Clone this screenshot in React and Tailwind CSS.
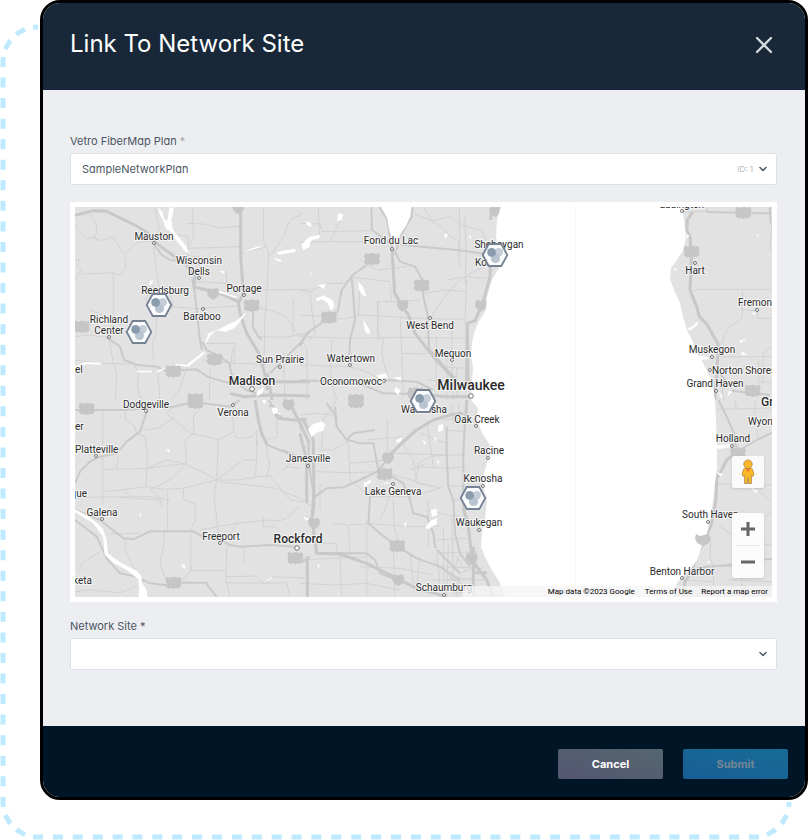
import React, { useState } from "react";
import clsx from "clsx";
import { ChevronDown, Minus, Plus, X } from "lucide-react";

// The map is drawn in six tiles, each at three units to the pixel.
const tiles = [
  {
    x: 70,
    y: 200,
    minor: [
      "M60 40L78 70L80 100L72 115L92 122L130 110L165 170L168 202L150 225L130 218L40 222",
      "M15 75L50 115L72 112M15 180L28 178L22 200L35 212L15 240",
      "M165 160L200 128L245 122M255 20L268 90L245 125",
      "M250 140L262 230L270 270L240 260L228 300L262 330L258 400L248 430L250 480",
      "M130 218L130 350L118 420L130 490L140 520L136 600",
      "M15 480L90 490L190 492L205 515L202 560L215 600",
      "M368 20L370 110L350 160M300 100L355 110L352 165L385 172L390 205",
      "M350 70L400 72L450 84L510 78M352 145L510 140",
      "M580 20L580 120L596 160L590 300L584 360L582 500",
      "M510 160L590 140M700 40L660 60L640 110L600 170",
      "M380 245L470 250L468 210M460 250L505 262L600 270L720 268",
      "M300 320L385 326L500 318M300 280L310 320M540 320L600 330L650 350L680 400L720 410",
      "M400 430L495 430L493 490L580 492L680 490M400 480L495 490",
      "M490 440L480 500L500 560M350 500L330 570L300 600M262 505L270 600",
      "M15 410L60 405L110 412M60 330L125 355M560 410L640 412L720 400",
      "M420 510L418 600M640 460L645 600M670 300L668 410",
    ],
    major: [
      "M250 130L275 165L300 180L325 182",
      "M366 235L374 275L390 420L396 450",
      "M396 425L410 450L450 470L478 490L488 540L530 570L590 590",
      "M110 412L150 440L162 480L200 494L260 500L290 514L340 510L380 508L412 530L460 545L478 548",
      "M536 312L550 330L548 380L565 410L576 420",
      "M720 392L690 430L650 470L600 520",
    ],
    highway: [
      "M15 46L70 32L110 34L200 78L232 98L260 130L300 160L340 185L375 225L372 262L440 276L505 305L510 340L530 400L566 460L584 520L592 570",
      "M512 20L512 170L520 280L508 305",
      "M592 520L606 600M480 580L520 590L600 585L720 588M610 545L720 545",
    ],
    water: [
      "M264 24L276 32L284 60L292 62L298 22L312 24L304 60L308 88L350 140L357 162L344 152L318 120L300 92L288 88L280 62L270 46Z",
      "M404 430L416 400L446 388L470 376L500 362L530 335L512 362L492 385L466 396L440 390L420 408L408 430Z",
      "M620 156L674 146L678 156L625 164ZM612 174L636 180L632 186L616 180ZM694 136L718 120L720 140L700 150Z",
      "M516 158L560 140L582 138L540 152ZM448 212L466 214L462 222ZM240 244L250 240L246 252L238 256Z",
      "M15 500L45 486L95 488L90 494L50 492L20 508ZM202 512L245 512L244 517L203 517ZM260 512L320 492L350 494L400 456L405 460L355 500L310 496L260 518Z",
      "M446 272L500 290L498 294L446 278ZM560 575L582 562L576 580L560 590ZM708 66L720 72L720 78Z",
    ],
    shields: [[36, 380], [310, 514], [434, 478], [545, 316], [376, 598]],
    badges: [[429, 281], [505, 24]],
  },
  {
    x: 300,
    y: 200,
    minor: [
      "M0 70L60 72L65 95L215 92M55 20L60 130M0 125L190 125M130 40L90 125",
      "M0 270L30 275L32 300L45 400L30 420M30 275L80 250L130 250L155 232L270 245",
      "M0 345L90 350L130 358L180 345L380 356L500 358",
      "M0 410L150 415L320 412L500 415M235 302L232 400L250 420L245 460L262 530",
      "M272 305L360 300M270 250L275 305L232 305L235 420",
      "M370 280L435 270L500 275M370 20L392 60L430 85L445 105L475 122L478 200",
      "M345 44L395 62L450 50L490 78L545 90L560 120M478 20L480 155",
      "M495 45L498 160L496 250M440 240L500 230L560 235",
      "M500 240L495 370M390 355L420 310L450 270L485 235L550 200",
      "M300 345L305 460L310 590M360 460L430 462L500 458M455 355L455 460L460 600",
      "M0 495L150 500L210 520L250 545M410 410L408 560M305 460L370 462",
      "M0 420L20 440L22 600M95 420L92 540L110 600M420 500L500 505M440 470L440 600M380 540L500 545M470 500L472 590",
      "M180 240L176 345M320 200L230 210L180 180",
    ],
    major: [
      "M214 20L216 90L270 130M238 20L262 60L268 100L275 140M338 20L335 50L300 110L290 150",
      "M200 195L158 225L125 270L112 340M155 230L160 290L165 360L150 420L148 470",
      "M282 150L300 185L345 200L368 240L370 290L382 340L388 460M275 130L340 138L470 150L560 162",
      "M0 440L20 400L70 365M0 540L100 545L190 555L250 580L340 582M250 540L350 545L400 570",
      "M240 168L215 178M500 370L498 560",
    ],
    highway: [
      "M276 150L284 280L325 345L345 400L400 470L470 545M575 20L572 60M572 160L570 230L548 310L525 362L502 370L504 560",
      "M388 450L440 510L465 535M320 580L440 590L510 590",
    ],
    water: [
      "M240 14L335 14L330 50L318 78L302 100L295 125L280 122L268 92L262 55Z",
      "M4 134L28 110L60 104L58 116L40 118L16 142ZM114 40L130 42L125 60L112 64ZM18 64L32 68L36 82L20 74Z",
      "M176 244L190 262L200 290L186 284L176 268ZM48 296L70 286L98 300L104 322L92 332L84 310L66 298L52 304Z",
      "M188 358L208 388L210 404L196 396ZM52 256L78 252L72 266ZM430 104L444 102L438 116ZM506 108L514 106L510 118Z",
      "M230 526L258 520L264 534L236 536ZM278 532L304 530L302 542ZM285 560L300 570L296 586L284 576ZM28 216L38 222L32 224Z",
    ],
    shields: [[216, 177], [365, 256], [87, 352], [168, 600], [348, 580]],
    badges: [[308, 316], [543, 316], [586, 32]],
  },
  {
    x: 540,
    y: 200,
    minor: [
      "M455 275L470 268L696 268M608 268L606 355L570 380L552 405L548 430L536 434",
      "M608 330L652 332L654 355L696 355M536 470L696 470M500 20L505 34L420 36",
      "M696 70L690 150L696 160M656 475L655 545L696 548M510 510L545 520L550 600",
      "M500 20L500 36M696 440L670 460L668 545",
    ],
    major: ["M500 36L690 40L690 20M690 40L692 70M575 572L690 585M540 520L570 560"],
    highway: [
      "M458 36L442 60L440 90L450 110L454 180L450 270L470 320L478 350L500 372L534 432L532 500L524 600",
    ],
    water: [
      "M442 386L458 378L474 362L472 376L450 392ZM478 466L505 472L508 478L480 480ZM400 206L410 204L406 214Z",
      "M606 454L622 466L604 464ZM598 422L620 416L602 430ZM636 340L646 336L644 346ZM648 104L656 104L654 110Z",
      "M534 572L548 588L545 597ZM568 572L576 575L560 594ZM438 100L448 108L442 116Z",
    ],
    shields: [[455, 155], [610, 38], [638, 572]],
    badges: [],
  },
  {
    x: 70,
    y: 400,
    minor: [
      "M98 35L98 310M165 35L168 60L195 80L200 100L225 110L232 160L228 260",
      "M225 90L265 85L310 55L360 100L445 118M310 20L290 40L310 60M370 100L345 120L350 190M400 10L370 50L372 105",
      "M98 208L230 206L290 180L340 190L410 222L440 240M228 205L350 190",
      "M98 275L150 270L230 260L280 268L340 265L440 240L520 180L560 180",
      "M440 240L445 120L490 96L490 60L480 40M495 100L500 115L545 112L560 90L560 140",
      "M440 240L500 240L555 232L560 180L562 120M560 230L600 228L660 300L700 305M590 130L592 170L600 190L590 230",
      "M450 245L620 265L700 300M440 240L432 290L445 400M20 292L240 290L300 300M160 270L190 292",
      "M293 270L293 392M340 268L342 300L375 310L376 360L360 392M150 292L270 300L275 320",
      "M0 330L70 350L120 380M165 415L165 450L195 510L220 545M283 395L280 440L270 490L290 545",
      "M362 400L362 515L330 545M362 512L465 512M470 440L468 540L480 590M580 350L580 380L620 382",
      "M480 405L500 370L600 360L630 362L650 355L690 320M525 490L520 440M470 530L560 528L570 545L590 550L610 530L720 535",
      "M620 60L622 110L592 120M660 190L640 210M15 575L60 570L150 578L200 560M470 548L600 550L650 548L660 590",
      "M28 510L35 490L90 455M210 400L120 402M145 170L140 205M650 200L690 205M280 300L240 270L300 240L345 195M390 390L500 370",
    ],
    major: [
      "M15 250L30 215L60 185L90 170L140 160L170 125L210 95L220 65L230 35M15 30L160 30L310 20L360 8L400 10",
      "M15 330L90 360L160 415L190 418L240 394L370 394L400 410L450 420L480 435L510 440L600 435L680 440",
      "M15 360L80 410L110 475L150 520L200 530L240 550L290 556L330 548L410 548L415 560L440 590",
      "M595 0L640 60M640 150L700 180M592 135L655 160M400 10L480 20L510 0",
    ],
    highway: [
      "M555 0L565 60L575 100L592 135M600 15L625 55L670 60L710 58M660 10L690 70L718 130M690 100L710 180L710 310",
    ],
    water: [
      "M15 328L60 352L98 385L110 420L114 460L150 487L200 512L216 530L214 545L230 570L232 592L205 592L208 560L205 538L170 510L130 488L104 464L99 410L70 370L15 336Z",
      "M576 0L588 0L584 14ZM602 22L622 24L624 40L610 42ZM625 36L634 42L626 44ZM288 148L300 150L296 158Z",
      "M208 336L214 342L212 354ZM332 492L346 496L344 508ZM584 545L608 530L604 538ZM700 350L716 356L712 362Z",
    ],
    shields: [[50, 26], [376, 8], [310, 548], [676, 474]],
    badges: [[655, 14]],
  },
  {
    x: 300,
    y: 400,
    minor: [
      "M0 45L45 40L100 45M0 130L30 150M65 145L70 60L110 0M145 110L150 240L210 290L205 370",
      "M50 215L150 218L240 215M55 150L100 150L150 120M210 290L330 290M330 290L420 265M235 210L400 260",
      "M262 60L262 150L240 230M300 120L340 180L350 250L430 265M360 100L440 130M350 200L440 205",
      "M265 150L280 160L440 165L495 165M350 240L355 190L390 170L440 165M330 210L380 190M380 60L400 200",
      "M200 370L330 380L420 378M280 300L282 380L300 440M240 360L270 290M380 330L440 345L480 350",
      "M410 460L530 455M410 420L500 415M430 380L432 560M455 350L460 520M480 460L450 540M420 500L550 505",
      "M150 375L200 372M45 430L110 430L110 460L45 460M0 480L200 470M120 465L125 590",
      "M200 360L200 590M280 440L285 590M330 460L340 550M100 370L145 375L150 460M180 500L300 505L400 525",
      "M0 550L100 555L200 550L300 570M360 470L350 560M400 480L480 560M440 540L520 535M470 590L480 520L530 500",
      "M430 60L500 55M455 10L460 70M475 10L478 60M440 90L500 95M200 120L310 110M150 190L265 180",
      "M60 250L60 330M45 320L20 310M385 300L385 440M500 200L440 205M500 260L450 258M490 300L450 300M440 520L500 560L505 590",
      "M410 450L420 550M445 430L440 590M470 470L500 520M380 560L480 555M460 580L560 570M395 540L560 540",
    ],
    major: [
      "M45 290L80 265L130 262L180 240L230 215L270 170M80 10L105 45L110 80L140 120L160 100L225 90",
      "M140 118L180 130L220 130L235 210M270 225L310 250L330 300L340 340L380 350L400 400L405 440L430 470L480 520",
      "M210 290L205 370L240 400L290 438L350 475L420 500L480 540M440 80L440 165L445 260L460 300L465 400L480 460L510 500",
      "M0 80L25 120L28 200L40 280L35 350L45 430M100 460L200 460L225 480L240 520L290 540L320 550",
      "M500 0L495 60L490 160L490 320L505 370M110 80L105 20M0 490L30 470",
    ],
    highway: [
      "M270 165L310 125L350 90L400 60L450 45L490 40M35 350L50 460L120 462L200 490L290 535L350 565L440 590M22 470L22 592M10 60L40 120L42 310L38 350",
      "M490 325L505 380L515 470L530 500L560 540L580 590M520 440L520 590M520 518L560 518",
      "M500 0L498 50",
    ],
    water: [
      "M24 88L40 72L64 64L76 72L70 92L50 98L34 112ZM415 76L430 72L428 92L414 96ZM288 122L306 110L304 122L292 130ZM366 118L378 128L374 134Z",
      "M192 250L214 238L212 248L190 262ZM250 250L266 246L264 252ZM392 330L410 326L412 346L396 350ZM376 380L392 362L412 354L410 372L384 388Z",
      "M312 370L320 368L316 384ZM408 184L418 184L416 192ZM400 112L412 114L406 122ZM52 492L58 494L56 510ZM408 444L414 444L412 450ZM10 350L24 356L18 362Z",
    ],
    shields: [[168, 6], [254, 222], [292, 438]],
    badges: [[264, 174], [42, 370], [295, 540], [515, 475]],
  },
  {
    x: 540,
    y: 400,
    minor: [
      "M585 0L590 30M530 28L696 24M532 252L696 255M645 0L645 60L655 110M535 375L570 400L600 420L696 436",
      "M505 400L512 430L510 470L520 500L522 590M540 500L605 498L606 590M560 540L696 545M440 540L522 545",
      "M640 240L650 270L690 300M655 410L656 436M680 350L696 330M600 498L600 430",
    ],
    major: ["M450 510L500 500L600 492L660 480L696 476M535 0L560 50L582 100L590 150M600 150L650 120L696 98"],
    highway: ["M600 150L560 180L545 210L530 235L528 300L515 370L490 430L465 470L458 510L435 545L430 590"],
    water: [
      "M530 136L572 132L570 142L534 148ZM530 216L548 222L542 230ZM632 264L655 272L650 280ZM498 484L512 484L508 490Z",
    ],
    shields: [[594, 160]],
    badges: [],
  },
];

const cities = [
  { name: "Mauston", x: 154, y: 240, dot: [154, 243] },
  { name: "Wisconsin", x: 199, y: 264 },
  { name: "Dells", x: 199, y: 275, dot: [199, 278] },
  { name: "Reedsburg", x: 165, y: 294 },
  { name: "Portage", x: 244, y: 292, dot: [244, 295] },
  { name: "Baraboo", x: 202, y: 320, dot: [203, 309] },
  { name: "Richland", x: 109, y: 323 },
  { name: "Center", x: 109, y: 334, dot: [109, 337] },
  { name: "el", x: 75, y: 373, anchor: "start" },
  { name: "Sun Prairie", x: 280, y: 363, dot: [280, 367] },
  { name: "Madison", x: 252, y: 385, dot: [252, 389], size: 12 },
  { name: "Fond du Lac", x: 391, y: 244, dot: [392, 249] },
  { name: "Sheboygan", x: 499, y: 248 },
  { name: "Kohler", x: 475, y: 266, anchor: "start" },
  { name: "West Bend", x: 430, y: 329, dot: [430, 318] },
  { name: "Mequon", x: 453, y: 357, dot: [452, 360] },
  { name: "Watertown", x: 351, y: 362, dot: [350, 365] },
  { name: "Oconomowoc", x: 351, y: 385, dot: [384, 381] },
  { name: "Milwaukee", x: 471, y: 390, dot: [471, 396], size: 14 },
  { name: "Ludington", x: 682, y: 208, dot: [682, 211] },
  { name: "Hart", x: 695, y: 274, dot: [695, 263] },
  { name: "Fremont", x: 738, y: 306, dot: [757, 310], anchor: "start" },
  { name: "Muskegon", x: 712, y: 353, dot: [712, 357] },
  { name: "Norton Shores", x: 712, y: 374, dot: [710, 370], anchor: "start" },
  { name: "Grand Haven", x: 715, y: 387, dot: [716, 391] },
  { name: "Grand Rapids", x: 761, y: 406, anchor: "start", size: 12 },
  { name: "Dodgeville", x: 146, y: 408, dot: [146, 411] },
  { name: "Verona", x: 233, y: 416, dot: [233, 405] },
  { name: "er", x: 75, y: 430, anchor: "start" },
  { name: "Platteville", x: 75, y: 453, dot: [96, 456], anchor: "start" },
  { name: "Dubuque", x: 87, y: 497, anchor: "end" },
  { name: "Galena", x: 102, y: 516, dot: [102, 519] },
  { name: "Freeport", x: 221, y: 540, dot: [220, 543] },
  { name: "Janesville", x: 308, y: 462, dot: [308, 466] },
  { name: "Rockford", x: 298, y: 543, dot: [297, 548], size: 12 },
  { name: "Maquoketa", x: 92, y: 584, anchor: "end" },
  { name: "Waukesha", x: 424, y: 413 },
  { name: "Oak Creek", x: 477, y: 423, dot: [476, 426] },
  { name: "Racine", x: 489, y: 454, dot: [488, 458] },
  { name: "Kenosha", x: 483, y: 482, dot: [483, 486] },
  { name: "Lake Geneva", x: 393, y: 495, dot: [393, 484] },
  { name: "Waukegan", x: 479, y: 526, dot: [479, 530] },
  { name: "Schaumburg", x: 444, y: 591, dot: [444, 595] },
  { name: "Wyoming", x: 748, y: 425, anchor: "start" },
  { name: "Holland", x: 733, y: 442, dot: [732, 446] },
  { name: "South Haven", x: 682, y: 518, dot: [708, 522], anchor: "start" },
  { name: "Benton Harbor", x: 682, y: 575, dot: [682, 578] },
];

const sites = [
  [159, 305],
  [139, 332],
  [495, 255],
  [423, 401],
  [473, 498],
];

function MapArt() {
  return (
    <svg
      viewBox="75 207 697 390"
      preserveAspectRatio="xMidYMid slice"
      className="block h-full w-full"
      role="img"
      aria-label="Map of network sites"
    >
      <rect x="75" y="207" width="697" height="390" fill="#e2e2e2" />
      {tiles.map((t) => (
        <g key={`${t.x}-${t.y}`} transform={`translate(${t.x} ${t.y}) scale(0.33333)`} fill="none" strokeLinejoin="round">
          <path d={t.minor.join("")} stroke="#d2d2d2" strokeWidth="3" />
          <path d={t.major.join("")} stroke="#cacaca" strokeWidth="6" />
          <path d={t.highway.join("")} stroke="#c8c8c8" strokeWidth="9" />
          <path d={t.water.join("")} fill="#fff" />
          {t.shields.map(([x, y]) => (
            <path
              key={`${x}-${y}`}
              transform={`translate(${x} ${y})`}
              d="M-20 -18L-12 -15L0 -18L12 -15L20 -18L24 -8L21 0L24 10L16 17L6 16L0 20L-6 16L-16 17L-24 10L-21 0L-24 -8Z"
              fill="#c6c6c6"
            />
          ))}
          {t.badges.map(([x, y]) => (
            <path
              key={`${x}-${y}`}
              transform={`translate(${x} ${y})`}
              d="M-13 -17L0 -14L13 -17L18 -6L16 6L8 14L0 19L-8 14L-16 6L-18 -6Z"
              fill="#c6c6c6"
            />
          ))}
        </g>
      ))}

      {/* Lake Michigan */}
      <path
        d="M501 206L497 220L496 237L502 263L492 280L487 297L486 310L478 323L474 333L472 343L471 357L473 367L472 380L471 400L478 408L477 420L482 433L490 445L491 453L487 463L483 477L484 490L487 500L485 520L482 533L481 547L485 557L492 570L500 583L505 598H673L677 583L682 577L690 570L697 560L703 543L707 533L711 517L713 500L715 483L717 467L717 447L716 420L715 400L713 390L710 377L703 363L697 353L692 340L687 330L683 317L680 303L675 292L670 279L671 268L675 263L683 250L686 237L684 220L682 206Z"
        fill="#fff"
      />
      <path d="M575.5 207V597" stroke="#f7f7f7" />
      {/* the South Haven badge hangs over the shore */}
      <path d="M696 534L700 536L708 534L711 538L709 543L703 546L697 543L695 538Z" fill="#c6c6c6" />

      <g fill="#fff" stroke="#555" strokeWidth="0.8">
        {cities.map((c) => c.dot && <circle key={c.name} cx={c.dot[0]} cy={c.dot[1]} r={c.size ? 2.3 : 1.5} />)}
        <circle cx="503" cy="592" r="2" stroke="#bbb" />
      </g>
      <g fontFamily="Roboto, sans-serif" fill="#2b2b2b" stroke="#fff" strokeWidth="2" strokeOpacity="0.7" paintOrder="stroke">
        {cities.map((c) => (
          <text
            key={c.name}
            x={c.x}
            y={c.y}
            textAnchor={c.anchor || "middle"}
            fontSize={c.size || 10}
            fontWeight={c.size ? 500 : 400}
          >
            {c.name}
          </text>
        ))}
      </g>

      {sites.map(([x, y]) => (
        <g key={`${x}-${y}`} transform={`translate(${x} ${y})`}>
          <path d="M-12.3 0L-6.3 -11H6.3L12.3 0L6.3 11H-6.3Z" fill="#fafcfd" stroke="#748294" strokeWidth="1.8" />
          <circle cx="3.8" cy="-2.8" r="4.2" fill="#c5ced8" />
          <circle cx="0.5" cy="3.4" r="4.6" fill="#b9c4d0" />
          <circle cx="-3.4" cy="-2.6" r="4.4" fill="#8b9bae" />
        </g>
      ))}
    </svg>
  );
}

function Pegman() {
  return (
    <svg viewBox="0 0 16 26" width="16" height="26" aria-hidden="true">
      <path
        d="M5 8.8H11L12.6 10.5L14 16L12.6 17.5L11.4 16.5V24.5H8.4V19H7.6V24.5H4.6V16.5L3.4 17.5L2 16L3.4 10.5Z"
        fill="#fbb829"
        stroke="#a98445"
        strokeWidth="0.8"
        strokeLinejoin="round"
      />
      <path d="M5.2 9.3H10.8L8 13.2Z" fill="#e8792b" />
      <circle cx="8" cy="5.2" r="4.2" fill="#fbb829" stroke="#a98445" strokeWidth="0.8" />
    </svg>
  );
}

function SiteMap() {
  return (
    <div className="relative mt-4 border-[5px] border-white bg-white aspect-[707/400] overflow-hidden">
      <MapArt />
      <div className="absolute right-2 bottom-[19px] flex flex-col gap-[25px] text-[#666]">
        <button type="button" aria-label="Street View" className="flex h-8 w-8 items-center justify-center rounded-xs bg-[#fafafa] shadow">
          <Pegman />
        </button>
        <div className="flex w-8 flex-col items-center rounded-xs bg-[#fcfcfc] shadow">
          <button type="button" aria-label="Zoom in" className="flex h-8 w-full items-center justify-center">
            <Plus size={24} strokeWidth={3} strokeLinecap="butt" />
          </button>
          <div className="h-px w-6 bg-[#e6e6e6]" />
          <button type="button" aria-label="Zoom out" className="flex h-8 w-full items-center justify-center">
            <Minus size={24} strokeWidth={3} strokeLinecap="butt" />
          </button>
        </div>
      </div>
      <div className="absolute right-0 bottom-0 flex h-[11px] items-center bg-[#f5f5f5]/80 pl-20 font-[Roboto,sans-serif] text-[8px] leading-none text-black">
        <span className="px-[5px]">Map data ©2023 Google</span>
        <a href="#terms" className="px-[5px]">Terms of Use</a>
        <a href="#report" className="px-1">Report a map error</a>
      </div>
    </div>
  );
}

function SelectField({ id, label, value, onChange, options, hint, required, muted }) {
  return (
    <div className="text-[#4b5563]">
      <label htmlFor={id} className="block text-[11px] leading-4">
        {label} {required && <span className={clsx(muted && "text-[#a3a8b0]")}>*</span>}
      </label>
      <div className="relative mt-1">
        <select
          id={id}
          value={value}
          onChange={(e) => onChange(e.target.value)}
          className="block h-8 w-full appearance-none rounded-xs border border-[#dde0e6] bg-white pl-[11px] pr-14 text-[11px]"
        >
          {options.map((o) => (
            <option key={o} value={o}>
              {o}
            </option>
          ))}
        </select>
        <span className="pointer-events-none absolute inset-y-0 right-2 flex items-center gap-1">
          {hint && <span className="text-[8px] text-[#b5b8bd]">{hint}</span>}
          <ChevronDown size={12} strokeWidth={3} />
        </span>
      </div>
    </div>
  );
}

export default function App() {
  const [plan, setPlan] = useState("SampleNetworkPlan");
  const [site, setSite] = useState("");

  return (
    <div className="relative bg-white pb-10 pl-10 font-[Inter,sans-serif]">
      <svg
        viewBox="0 0 808 840"
        preserveAspectRatio="none"
        className="absolute inset-0 h-full w-full"
        fill="none"
        stroke="#bdeaff"
        strokeWidth="5"
        aria-hidden="true"
      >
        <path d="M3 62V802" strokeDasharray="10 10.55" strokeDashoffset="5" />
        <path d="M38 837H754" strokeDasharray="10 9.89" strokeDashoffset="5" />
        <path d="M38 27A35 35 0 0 0 3 62" strokeDasharray="10 8.33" strokeDashoffset="5" />
        <path d="M3 802A35 35 0 0 0 38 837" strokeDasharray="10 8.33" strokeDashoffset="5" />
        <path d="M789 802A35 35 0 0 1 754 837" strokeDasharray="10 8.33" strokeDashoffset="5" />
      </svg>

      <section
        role="dialog"
        aria-labelledby="dialog-title"
        className="relative overflow-hidden rounded-[20px] border-[3px] border-black bg-[#edeef2]"
      >
        <header className="flex h-[87px] items-start justify-between border-b border-[#1b2340] bg-[#182838] pt-[25px] pr-[27px] pl-[27px]">
          <h1 id="dialog-title" className="text-2xl leading-8 text-white">
            Link To Network Site
          </h1>
          <button type="button" aria-label="Close" className="mt-[3px] text-[#d5d9dd]">
            <X size={28} strokeWidth={2} />
          </button>
        </header>

        <div className="pt-[43px] pr-7 pb-14 pl-[27px] [font-feature-settings:'cv11']">
          <SelectField
            id="plan"
            label="Vetro FiberMap Plan"
            required
            muted
            hint="ID: 1"
            value={plan}
            onChange={setPlan}
            options={["SampleNetworkPlan"]}
          />
          <div className="pt-px">
            <SiteMap />
          </div>
          <div className="mt-4">
            <SelectField id="site" label="Network Site" required value={site} onChange={setSite} options={[""]} />
          </div>
        </div>

        <footer className="flex justify-end gap-5 bg-[#001525] pt-[23px] pr-[17px] pb-[18px] text-[11px] font-bold">
          <button type="button" className="h-[30px] w-[105px] rounded-xs bg-linear-to-tr from-[#545672] to-[#54666f] text-white">
            Cancel
          </button>
          <button type="submit" disabled className="h-[30px] w-[105px] rounded-xs bg-linear-to-tr from-[#175e95] to-[#186c96] text-[#748694]">
            Submit
          </button>
        </footer>
      </section>
    </div>
  );
}
